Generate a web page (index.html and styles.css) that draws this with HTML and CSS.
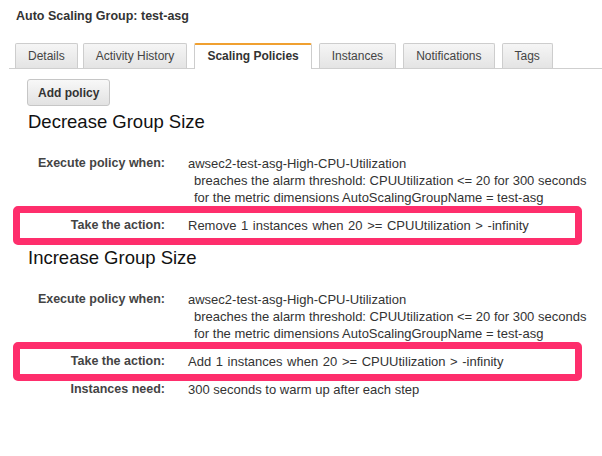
FILE: index.html
```html
<!DOCTYPE html>
<html lang="en">
<head>
    <meta charset="UTF-8">
    <title>Auto Scaling Group: test-asg</title>
    <link rel="stylesheet" href="styles.css">
</head>
<body>

<div class="page">
    <h1 class="asg-title">Auto Scaling Group: test-asg</h1>

    <ul class="tabs">
        <li class="tab">Details</li>
        <li class="tab">Activity History</li>
        <li class="tab active">Scaling Policies</li>
        <li class="tab">Instances</li>
        <li class="tab">Notifications</li>
        <li class="tab">Tags</li>
    </ul>

    <button class="add-btn">Add policy</button>

    <!-- decrease policy -->
    <h2 class="policy-name">Decrease Group Size</h2>
    <div class="policy">
        <div class="row">
            <div class="label">Execute policy when:</div>
            <div class="value">
                awsec2-test-asg-High-CPU-Utilization
                <span class="sub">breaches the alarm threshold: CPUUtilization &lt;= 20 for 300 seconds</span>
                <span class="sub">for the metric dimensions AutoScalingGroupName = test-asg</span>
            </div>
        </div>
        <div class="row marked">
            <div class="label">Take the action:</div>
            <div class="value action">Remove 1 instances when 20 &gt;= CPUUtilization &gt; -infinity</div>
        </div>
    </div>

    <!-- increase policy -->
    <h2 class="policy-name">Increase Group Size</h2>
    <div class="policy">
        <div class="row">
            <div class="label">Execute policy when:</div>
            <div class="value">
                awsec2-test-asg-High-CPU-Utilization
                <span class="sub">breaches the alarm threshold: CPUUtilization &lt;= 20 for 300 seconds</span>
                <span class="sub">for the metric dimensions AutoScalingGroupName = test-asg</span>
            </div>
        </div>
        <div class="row marked">
            <div class="label">Take the action:</div>
            <div class="value action">Add 1 instances when 20 &gt;= CPUUtilization &gt; -infinity</div>
        </div>
        <div class="row">
            <div class="label">Instances need:</div>
            <div class="value">300 seconds to warm up after each step</div>
        </div>
    </div>
</div>

</body>
</html>
```

FILE: styles.css
```css
body {
    margin: 0;
    font-family: "Liberation Sans", Arial, Helvetica, sans-serif;
    background-color: #fff;
    color: #333;
}

.page {
    padding-top: 8px;
}

.asg-title {
    margin: 0 0 19px 16px;
    font-size: 12.5px;
    line-height: 16px;
    font-weight: bold;
    color: #333;
}

.tabs {
    list-style: none;
    display: flex;
    gap: 7px;
    margin: 0 0 0 9px;
    padding: 0 0 0 6px;
    border-bottom: 1px solid #cfcfcf;
}

.tab {
    box-sizing: border-box;
    height: 25px;
    line-height: 24px;
    padding: 0 12px;
    font-size: 12px;
    color: #444;
    background: linear-gradient(#f5f5f5, #e4e4e4);
    border: 1px solid #cdcdcd;
    border-bottom: none;
    border-radius: 2px 2px 0 0;
}

.tab:first-child {
    margin-right: -2px;
}

.tab.active {
    height: 26px;
    margin-bottom: -1px;
    line-height: 23px;
    font-weight: bold;
    color: #333;
    background: #fff;
    border-top: 2px solid #f0a030;
}

.add-btn {
    display: block;
    box-sizing: border-box;
    height: 27px;
    margin: 10px 0 0 27px;
    padding: 0 10px;
    font-family: inherit;
    font-size: 12px;
    font-weight: bold;
    color: #333;
    background: linear-gradient(#f8f8f8, #e2e2e2);
    border: 1px solid #c6c6c6;
    border-radius: 3px;
}

.policy-name {
    margin: 5px 0 0 28px;
    font-size: 18.5px;
    line-height: 22px;
    font-weight: normal;
    color: #111;
}

.policy-name + .policy {
    margin-top: 22px;
}

.policy + .policy-name {
    margin-top: 2px;
}

.row {
    display: grid;
    grid-template-columns: 145px 1fr;
    column-gap: 23px;
    width: 555px;
    margin-left: 13px;
    border: 7px solid transparent;
    border-top-width: 0;
    border-bottom-width: 0;
    line-height: 17px;
}

.row.marked {
    padding: 4px 0;
    border-width: 7px;
    border-color: #fe2e6c;
    border-radius: 5px;
}

.label {
    text-align: right;
    font-size: 12.5px;
    font-weight: bold;
    color: #444;
}

.value {
    font-size: 13px;
    color: #333;
    white-space: nowrap;
}

.action {
    word-spacing: 1px;
}

.sub {
    display: block;
    padding-left: 6px;
}
```
